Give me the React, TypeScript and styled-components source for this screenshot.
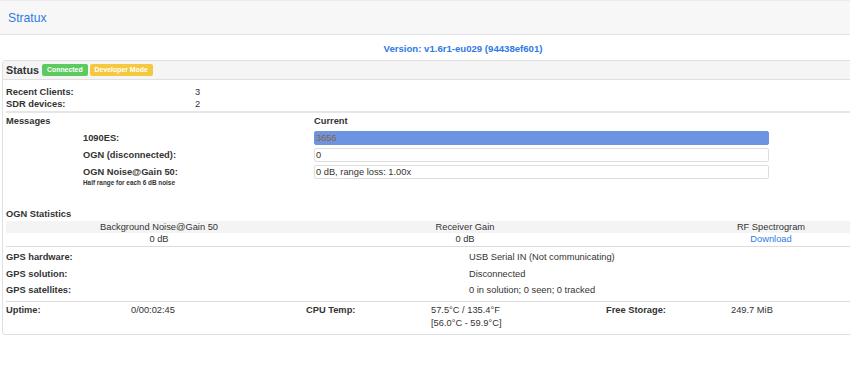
import React from "react";
import styled, { createGlobalStyle } from "styled-components";

const GlobalStyle = createGlobalStyle`
  html, body { margin: 0; padding: 0; background: #fff; overflow: hidden; }
  body {
    font-family: "Liberation Sans", Arial, Helvetica, sans-serif;
    font-size: 9.3px;
    color: #333;
  }
`;

const Page = styled.div`
  width: 926px;
`;

const Navbar = styled.div`
  height: 33px;
  background: #f7f7f7;
  border-top: 1px solid #ececec;
  border-bottom: 1px solid #e1e1e1;
  display: flex;
  align-items: center;
  padding-left: 8px;
`;

const Brand = styled.a`
  color: #2f7ae5;
  font-size: 12.2px;
  text-decoration: none;
  padding-top: 1px;
`;

const VersionLine = styled.div`
  height: 25px;
  display: flex;
  align-items: center;
  justify-content: center;
  font-weight: bold;
  font-size: 9.6px;
  color: #2f7ae5;
  padding-top: 1px;
  box-sizing: border-box;
`;

const Panel = styled.div`
  margin: 0 0 0 2px;
  border: 1px solid #e0e0e0;
  border-radius: 3px;
  width: 922px;
`;

const PanelHeading = styled.div`
  height: 18px;
  background: #f5f5f5;
  border-bottom: 1px solid #e0e0e0;
  display: flex;
  align-items: center;
  gap: 2px;
  padding: 0 3px;
`;

const PanelTitle = styled.span`
  font-size: 10.8px;
  font-weight: bold;
  color: #333;
  margin-right: 1px;
`;

const Badge = styled.span<{ $bg: string }>`
  background: ${(p) => p.$bg};
  color: #fff;
  font-weight: bold;
  font-size: 6.9px;
  line-height: 12px;
  height: 12px;
  padding: 0 5px;
  border-radius: 2px;
`;

const PanelBody = styled.div`
  padding: 6px 3px 3.5px 3px;
`;

const InfoRow = styled.div`
  display: grid;
  grid-template-columns: 189px 1fr;
  height: 12px;
  line-height: 12px;
`;

const Label = styled.span`
  font-weight: bold;
`;

const Divider = styled.div`
  margin-top: 1px;
  border-top: 2px solid #e6e6e6;
`;

const MsgHeader = styled.div`
  display: grid;
  grid-template-columns: 308px 1fr;
  height: 14px;
  line-height: 14px;
  margin-top: 1px;
  font-weight: bold;
`;

const MsgRow = styled.div`
  display: grid;
  grid-template-columns: 77px 231px 455px;
  align-items: center;
  height: 14px;
  margin-top: 3px;
`;

const ValueBox = styled.div<{ $active?: boolean }>`
  height: 14px;
  box-sizing: border-box;
  border: 1px solid ${(p) => (p.$active ? "#6d94e3" : "#dedede")};
  border-radius: 2px;
  background: ${(p) => (p.$active ? "#6d94e3" : "#fff")};
  color: ${(p) => (p.$active ? "#8a6534" : "#333")};
  padding-left: 1px;
  line-height: 12px;
`;

const Note = styled.div`
  padding-left: 77px;
  font-size: 6.4px;
  font-weight: bold;
  line-height: 8px;
`;

const SectionTitle = styled.div`
  font-weight: bold;
  margin-top: 21px;
  height: 12px;
  line-height: 12px;
`;

const StatTable = styled.div`
  margin-top: 1px;
  border-bottom: 1px solid #dcdcdc;
`;

const StatRow = styled.div<{ $head?: boolean }>`
  display: grid;
  grid-template-columns: 306px 306px 306px;
  height: ${(p) => (p.$head ? 12 : 13)}px;
  line-height: 12px;
  background: ${(p) => (p.$head ? "#f4f4f4" : "transparent")};
  text-align: center;
`;

const Link = styled.a`
  color: #2f7ae5;
  text-decoration: none;
`;

const GpsList = styled.div`
  padding: 2px 0;
  border-bottom: 1px solid #dcdcdc;
`;

const GpsRow = styled.div`
  display: grid;
  grid-template-columns: 463px 1fr;
  height: 16.5px;
  line-height: 16.5px;
`;

const SysGrid = styled.div`
  display: grid;
  grid-template-columns: repeat(3, 300px);
  padding-top: 2.5px;
`;

const SysCell = styled.div`
  display: grid;
  grid-template-columns: 125px 1fr;
  line-height: 13px;
`;

export default function App() {
  return (
    <Page>
      <GlobalStyle />
      <Navbar>
        <Brand href="#">Stratux</Brand>
      </Navbar>
      <VersionLine>Version: v1.6r1-eu029 (94438ef601)</VersionLine>
      <Panel>
        <PanelHeading>
          <PanelTitle>Status</PanelTitle>
          <Badge $bg="#5ccb5f">Connected</Badge>
          <Badge $bg="#f4c93f">Developer Mode</Badge>
        </PanelHeading>
        <PanelBody>
          <InfoRow>
            <Label>Recent Clients:</Label>
            <span>3</span>
          </InfoRow>
          <InfoRow>
            <Label>SDR devices:</Label>
            <span>2</span>
          </InfoRow>
          <Divider />
          <MsgHeader>
            <span>Messages</span>
            <span>Current</span>
          </MsgHeader>
          <MsgRow>
            <span />
            <Label>1090ES:</Label>
            <ValueBox $active>3656</ValueBox>
          </MsgRow>
          <MsgRow>
            <span />
            <Label>OGN (disconnected):</Label>
            <ValueBox>0</ValueBox>
          </MsgRow>
          <MsgRow>
            <span />
            <Label>OGN Noise@Gain 50:</Label>
            <ValueBox>0 dB, range loss: 1.00x</ValueBox>
          </MsgRow>
          <Note>Half range for each 6 dB noise</Note>
          <SectionTitle>OGN Statistics</SectionTitle>
          <StatTable>
            <StatRow $head>
              <span>Background Noise@Gain 50</span>
              <span>Receiver Gain</span>
              <span>RF Spectrogram</span>
            </StatRow>
            <StatRow>
              <span>0 dB</span>
              <span>0 dB</span>
              <span>
                <Link href="#">Download</Link>
              </span>
            </StatRow>
          </StatTable>
          <GpsList>
            <GpsRow>
              <Label>GPS hardware:</Label>
              <span>USB Serial IN (Not communicating)</span>
            </GpsRow>
            <GpsRow>
              <Label>GPS solution:</Label>
              <span>Disconnected</span>
            </GpsRow>
            <GpsRow>
              <Label>GPS satellites:</Label>
              <span>0 in solution; 0 seen; 0 tracked</span>
            </GpsRow>
          </GpsList>
          <SysGrid>
            <SysCell>
              <Label>Uptime:</Label>
              <span>0/00:02:45</span>
            </SysCell>
            <SysCell>
              <Label>CPU Temp:</Label>
              <span>
                57.5°C / 135.4°F
                <br />
                [56.0°C - 59.9°C]
              </span>
            </SysCell>
            <SysCell>
              <Label>Free Storage:</Label>
              <span>249.7 MiB</span>
            </SysCell>
          </SysGrid>
        </PanelBody>
      </Panel>
    </Page>
  );
}
